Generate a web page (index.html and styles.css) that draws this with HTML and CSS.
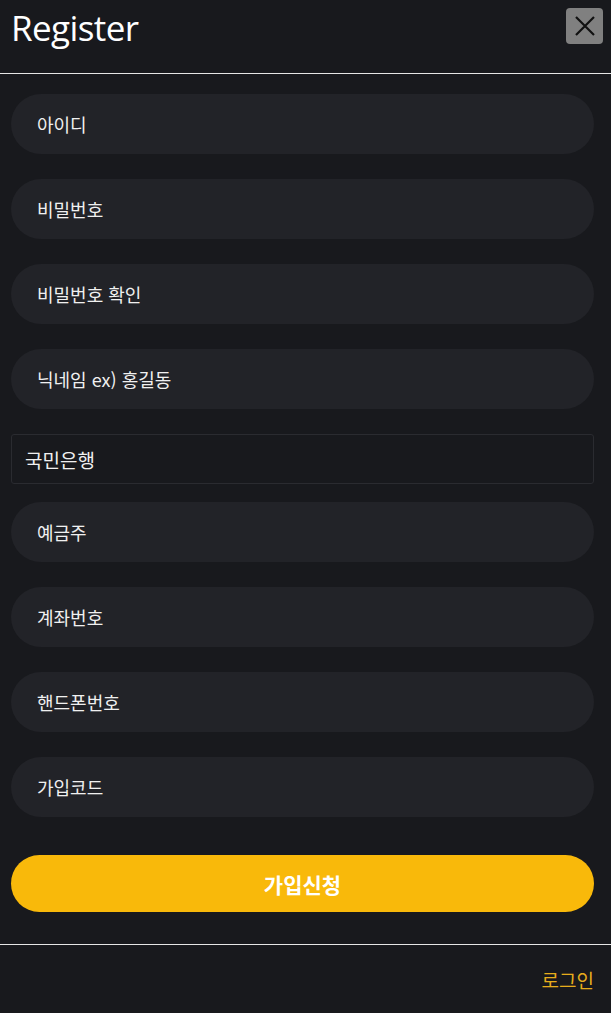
FILE: index.html
```html
<!DOCTYPE html>
<html lang="ko">
<head>
  <meta charset="UTF-8" />
  <title>Register</title>
  <link rel="stylesheet" href="styles.css">
</head>
<body>
  <header class="modal-head">
    <h1>Register</h1>
    <button class="close-btn" type="button" aria-label="close">
      <svg width="22" height="22" viewBox="0 0 22 22">
        <path d="M2 2 L20 20 M20 2 L2 20" stroke="#111" stroke-width="2.2" fill="none"/>
      </svg>
    </button>
  </header>

  <form class="reg-form">
    <input class="field" type="text" placeholder="아이디">
    <input class="field" type="password" placeholder="비밀번호">
    <input class="field" type="password" placeholder="비밀번호 확인">
    <input class="field" type="text" placeholder="닉네임 ex) 홍길동">
    <select class="bank">
      <option>국민은행</option>
      <option>신한은행</option>
      <option>우리은행</option>
    </select>
    <input class="field" type="text" placeholder="예금주">
    <input class="field" type="text" placeholder="계좌번호">
    <input class="field" type="text" placeholder="핸드폰번호">
    <input class="field" type="text" placeholder="가입코드">
    <button class="submit" type="button">가입신청</button>
  </form>

  <footer class="modal-foot">
    <a href="#">로그인</a>
  </footer>
</body>
</html>
```

FILE: styles.css
```css
body {
  margin: 0;
  background: #18191d;
  color: #fff;
  font-family: "Noto Sans", "Noto Sans CJK KR", sans-serif;
}

.modal-head {
  box-sizing: border-box;
  display: flex;
  justify-content: space-between;
  align-items: flex-start;
  height: 74px;
  padding: 8px 8px 0 11px;
  border-bottom: 1px solid #e6e6e6;
}

.modal-head h1 {
  margin: 0;
  font-family: "Open Sans", sans-serif;
  font-weight: 400;
  font-size: 35px;
  line-height: 40px;
  letter-spacing: -0.6px;
}

.close-btn {
  width: 37px;
  height: 36px;
  padding: 0;
  border: none;
  border-radius: 4px;
  background: #808080;
  display: flex;
  align-items: center;
  justify-content: center;
}

.reg-form {
  display: flex;
  flex-direction: column;
  padding: 20px 17px 0 11px;
}

.field {
  height: 60px;
  margin-bottom: 25px;
  padding: 0 26px;
  border: none;
  border-radius: 30px;
  background: #222328;
  color: #fff;
  font-family: "Noto Sans CJK KR", sans-serif;
  font-size: 18px;
  outline: none;
}

.field::placeholder {
  color: #f0f0f0;
}

.bank {
  appearance: none;
  -webkit-appearance: none;
  height: 50px;
  margin-bottom: 18px;
  padding: 0 13px;
  border: 1px solid #2a2b30;
  border-radius: 3px;
  background: #18191d;
  color: #f0f0f0;
  font-family: "Noto Sans CJK KR", sans-serif;
  font-size: 19px;
  outline: none;
}

.submit {
  height: 57px;
  margin-top: 13px;
  border: none;
  border-radius: 29px;
  background: #f9b90a;
  color: #fff;
  font-family: "Noto Sans CJK KR", sans-serif;
  font-weight: 700;
  font-size: 21px;
}

.modal-foot {
  margin-top: 32px;
  border-top: 1px solid #e6e6e6;
  display: flex;
  justify-content: flex-end;
  padding: 21px 17px 0 11px;
}

.modal-foot a {
  color: #e6ad1c;
  text-decoration: none;
  font-family: "Noto Sans CJK KR", sans-serif;
  font-size: 19px;
}
```
